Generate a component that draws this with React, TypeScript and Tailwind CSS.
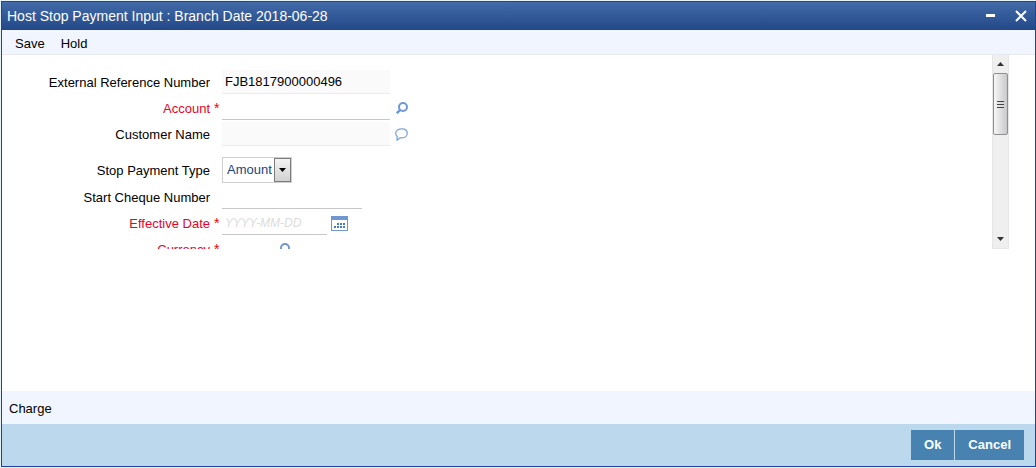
/**
 * Host Stop Payment Input window
 *
 * Title bar, toolbar, scrolling entry form and the Ok / Cancel footer.
 */

import React, { useRef, useState } from 'react';

interface FieldRowProps {
  id: string;
  label: string;
  required?: boolean;
  className?: string;
  children: React.ReactNode;
}

function FieldRow({ id, label, required = false, className = 'h-6', children }: FieldRowProps) {
  return (
    <div className={`flex shrink-0 items-center ${className}`}>
      <label htmlFor={id} className={`w-52 pt-0.5 text-right ${required ? 'text-[#ea0029]' : 'text-black'}`}>
        {label}
      </label>
      <span className="w-3 pl-1 text-sm leading-4 text-[#f00000]">{required && '*'}</span>
      {children}
    </div>
  );
}

const inputClasses = 'h-6 border-b px-[3px] outline-none';
const editable = 'border-[#c8c8c8] bg-white';
const readOnlyStyle = 'border-[#ececec] bg-[#fafafa]';

function SearchIcon() {
  return (
    <svg className="h-3 w-3" viewBox="0 0 12 12" fill="none" stroke="#6f98d3">
      <circle cx="7" cy="5" r="4" strokeWidth="2" />
      <path d="M4.2 7.8L.8 11.2" strokeWidth="2.4" />
    </svg>
  );
}

function CommentIcon() {
  return (
    <svg className="h-[13px] w-[13px]" viewBox="0 0 13 13" fill="none" stroke="#7fa5dc" strokeWidth="1.3">
      <path d="M6.8 .8C10 .8 12.3 2.6 12.3 5.3S10 9.9 7 9.9C6.4 9.9 5.8 9.9 5.3 9.8L2 12.2L2.2 8.6C1.2 7.7.7 6.6.7 5.3C.7 2.6 3.5.8 6.8.8Z" />
    </svg>
  );
}

function CalendarIcon() {
  return (
    <svg className="h-[15px] w-[17px]" viewBox="0 0 17 15">
      <rect x=".5" y=".5" width="16" height="14" fill="#fff" stroke="#6f98d3" />
      <path fill="#6f98d3" d="M0 0h17v4H0z" />
      <path fill="#4a7ac4" d="M6 7h2v2H6zM9 7h2v2H9zM12 7h2v2h-2zM3 10h2v2H3zM6 10h2v2H6zM9 10h2v2H9zM12 10h2v2h-2z" />
    </svg>
  );
}

export default function App() {
  const panelRef = useRef<HTMLDivElement>(null);
  const [offset, setOffset] = useState(0);

  const scroll = (delta: number) => {
    panelRef.current?.scrollBy({ top: delta });
    setOffset(panelRef.current?.scrollTop ?? 0);
  };

  return (
    <div className="flex min-h-screen flex-col bg-[#e6f3f6] pt-px pb-px pl-px font-['Liberation_Sans',Arial,sans-serif] text-[13px] leading-4 text-black">
      <div className="flex grow flex-col border border-[#1f449c] bg-white">
        {/* Title bar */}
        <header className="flex h-7 items-center justify-between bg-linear-to-b from-[#426ba8] to-[#234888] pr-2 pl-[5px] text-white">
          <h1 className="text-sm">Host Stop Payment Input : Branch Date 2018-06-28</h1>
          <div className="flex items-center gap-5">
            <button type="button" aria-label="Minimize">
              <svg className="h-3 w-[9px]" viewBox="0 0 9 12">
                <path d="M0 4h9v3H0z" fill="#fff" />
              </svg>
            </button>
            <button type="button" aria-label="Close">
              <svg className="h-3 w-3" viewBox="0 0 12 12" stroke="#fff" strokeWidth="2">
                <path d="M1 1l10 10M11 1L1 11" />
              </svg>
            </button>
          </div>
        </header>

        {/* Toolbar */}
        <nav className="flex h-[25px] items-center gap-4 border-b border-[#e8e9ee] bg-[#f0f5ff] pt-1 pl-[13px]">
          <button type="button">Save</button>
          <button type="button">Hold</button>
        </nav>

        {/* Entry form */}
        <div className="mr-[26px] flex h-[194px]">
          <div ref={panelRef} className="flex grow flex-col gap-0.5 overflow-hidden pt-[15px]">
            <FieldRow id="reference" label="External Reference Number">
              <input id="reference" className={`${inputClasses} ${readOnlyStyle} w-[168px]`} defaultValue="FJB1817900000496" readOnly />
            </FieldRow>
            <FieldRow id="account" label="Account" required>
              <input id="account" className={`${inputClasses} ${editable} w-[168px]`} />
              <button type="button" aria-label="Find account" className="ml-1.5">
                <SearchIcon />
              </button>
            </FieldRow>
            <FieldRow id="customer" label="Customer Name">
              <input id="customer" className={`${inputClasses} ${readOnlyStyle} w-[168px]`} readOnly />
              <button type="button" aria-label="Show full name" className="ml-[5px]">
                <CommentIcon />
              </button>
            </FieldRow>
            <FieldRow id="type" label="Stop Payment Type" className="mt-[9px] h-[26px]">
              <div className="relative">
                <select id="type" className="block h-[26px] w-[70px] appearance-none border border-[#cfcfcf] bg-white pl-1 text-[#1c4480] outline-none">
                  <option>Amount</option>
                  <option>Cheque</option>
                </select>
                <span className="pointer-events-none absolute inset-y-px right-px flex w-[17px] items-center justify-center border border-[#7c7c7c] bg-linear-to-b from-[#f4f4f4] to-[#d2d2d2]">
                  <svg className="h-1 w-[7px]" viewBox="0 0 7 4">
                    <path d="M0 0h7L3.5 4z" />
                  </svg>
                </span>
              </div>
            </FieldRow>
            <FieldRow id="cheque" label="Start Cheque Number">
              <input id="cheque" className={`${inputClasses} ${editable} w-[140px]`} />
            </FieldRow>
            <FieldRow id="effective" label="Effective Date" required>
              <input id="effective" placeholder="YYYY-MM-DD" className={`${inputClasses} ${editable} w-[105px] text-xs placeholder:text-[#dcdcdc] placeholder:italic`} />
              <button type="button" aria-label="Pick a date" className="ml-1">
                <CalendarIcon />
              </button>
            </FieldRow>
            <FieldRow id="currency" label="Currency" required>
              <input id="currency" className={`${inputClasses} ${editable} w-[50px]`} />
              <button type="button" aria-label="Find currency" className="ml-1.5">
                <SearchIcon />
              </button>
            </FieldRow>
          </div>

          {/* Scroll bar */}
          <div className="flex w-[17px] flex-col border border-t-0 border-[#e6e6e6] bg-[#efefef]">
            <button type="button" aria-label="Scroll up" onClick={() => scroll(-26)} className="flex h-[18px] items-center justify-center">
              <svg className="h-1 w-[7px]" viewBox="0 0 7 4">
                <path d="M0 4h7L3.5 0z" fill="#333" />
              </svg>
            </button>
            <div className="grow">
              <div
                className="flex h-[62px] flex-col items-center justify-center gap-0.5 rounded-xs border border-[#8e8e8e] bg-linear-to-r from-[#f6f6f6] to-[#c9c9cb]"
                style={{ marginTop: offset }}
              >
                <span className="h-px w-[7px] bg-[#444]" />
                <span className="h-px w-[7px] bg-[#444]" />
                <span className="h-px w-[7px] bg-[#444]" />
              </div>
            </div>
            <button type="button" aria-label="Scroll down" onClick={() => scroll(26)} className="flex h-[18px] items-center justify-center">
              <svg className="h-1 w-[7px]" viewBox="0 0 7 4">
                <path d="M0 0h7L3.5 4z" fill="#333" />
              </svg>
            </button>
          </div>
        </div>

        {/* Related screens */}
        <div className="mt-auto flex h-[33px] items-center bg-[#f0f5ff] pt-0.5 pl-[7px]">
          <a href="#charge">Charge</a>
        </div>

        {/* Footer actions */}
        <footer className="flex h-[42px] items-center justify-end gap-px bg-[#bcd8ed] pr-[11px] font-bold text-white">
          <button type="button" className="h-[30px] bg-[#4782b1] px-[13px]">
            Ok
          </button>
          <button type="button" className="h-[30px] bg-[#4782b1] px-[13px]">
            Cancel
          </button>
        </footer>
      </div>
    </div>
  );
}
